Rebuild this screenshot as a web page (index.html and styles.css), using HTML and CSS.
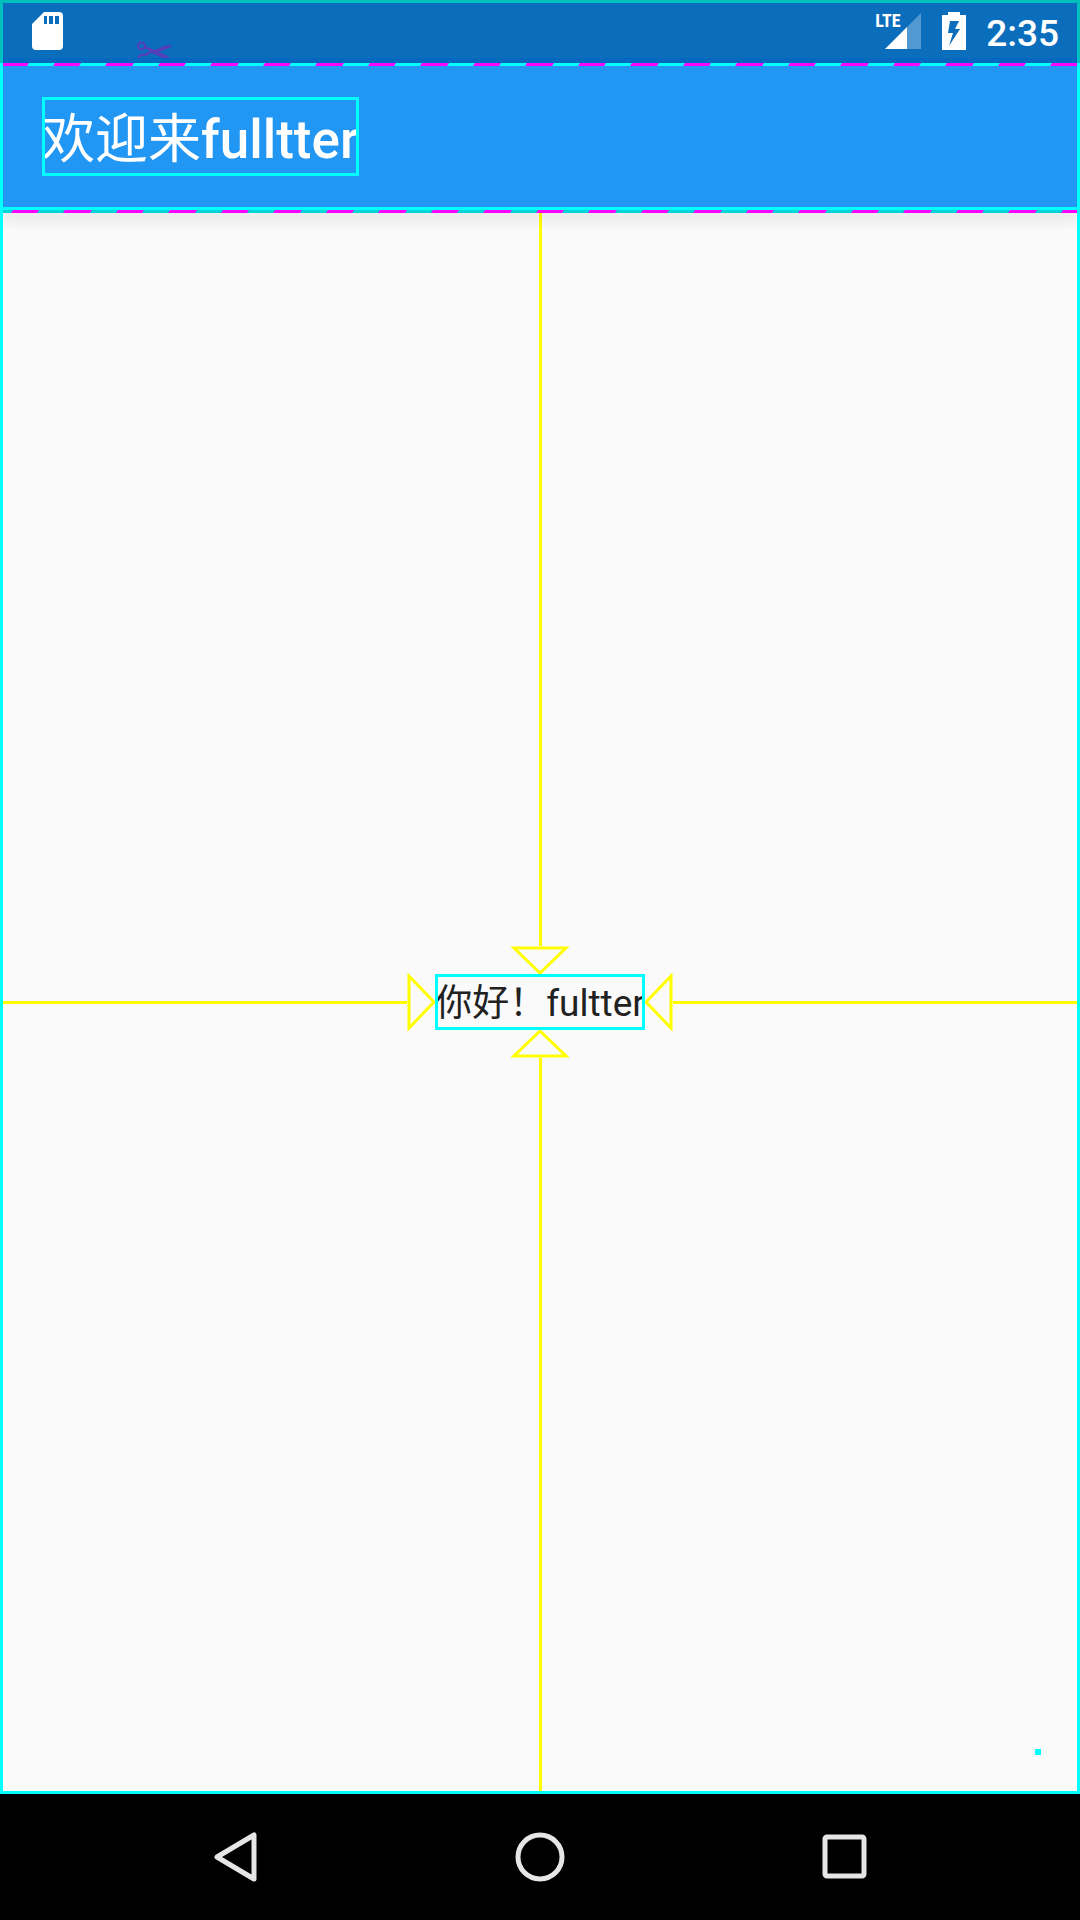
FILE: index.html
```
<!DOCTYPE html>
<html lang="zh-CN">
<head>
<meta charset="utf-8">
<meta name="viewport" content="width=device-width, initial-scale=1">
<title>欢迎来fulltter</title>
<link rel="stylesheet" href="styles.css">
</head>
<body>
<div class="status-bar">
  <svg class="sd-card" viewBox="0 0 31 38" aria-hidden="true"><path fill="#fff" fill-rule="evenodd" d="M12 0H27Q31 0 31 4V34Q31 38 27 38H4Q0 38 0 34V12ZM12 4V12H15V4ZM17 4V12H21V4ZM23 4V12H27V4Z"/></svg>
  <svg class="scissors" viewBox="0 0 35 17" aria-hidden="true">
    <g fill="none" stroke="#583db8" stroke-width="2"><circle cx="4.500" cy="5" r="3.500"/><path d="M1 17Q4 12 11 14"/></g>
    <path fill="#583db8" d="M8 5L18 9L27 5Q32 3 35 5Q33 7 21 11Q28 13 33 17H26L15 12L9 14L8 13L13 10L7 7Z"/>
  </svg>
  <div class="indicators">
    <div class="network">
      <span class="network-type">LTE</span>
      <svg class="signal" viewBox="0 0 36 36" aria-hidden="true"><path fill="#fff" fill-opacity=".3" d="M22 14L36 0V36H22Z"/><path fill="#fff" d="M0 36L22 14V36Z"/></svg>
    </div>
    <svg class="battery" viewBox="0 0 24 38" aria-hidden="true"><path fill="#fff" fill-rule="evenodd" d="M6 0H18V3H24V38H0V3H6ZM8 9L6 21H11L7 34L18 17H13L17 9Z"/></svg>
    <time class="clock">2:35</time>
  </div>
</div>
<div class="screen">
  <svg class="stripe" aria-hidden="true">
    <defs><pattern id="stripe-top" x="55" width="105" height="3" patternUnits="userSpaceOnUse"><path fill="#0ff" d="M0 0H105V3H0Z"/><path fill="#f0f" d="M0 0H26L24 3H0ZM52 0H79L77 3H50ZM105 0V3H103Z"/></pattern></defs>
    <rect width="100%" height="3" fill="url(#stripe-top)"/>
  </svg>
  <header class="app-bar">
    <h1 class="title"><span class="title-cjk">欢迎来</span>fulltter</h1>
  </header>
  <svg class="stripe stripe-bottom" aria-hidden="true">
    <defs><pattern id="stripe-bottom" x="13" width="105" height="3" patternUnits="userSpaceOnUse"><path fill="#00d4d4" d="M0 0H105V3H0Z"/><path fill="#f0f" d="M0 0H26L24 3H0ZM52 0H79L77 3H50ZM105 0V3H103Z"/></pattern></defs>
    <rect width="100%" height="3" fill="url(#stripe-bottom)"/>
  </svg>
  <main class="content">
    <div class="guide guide-top"><i class="line"></i><svg class="arrow-v" viewBox="0 0 58 28" aria-hidden="true"><path d="M3 2H55L29 27Z"/></svg></div>
    <div class="guide guide-left"><i class="line"></i><svg class="arrow-h" viewBox="0 0 28 58" aria-hidden="true"><path d="M2 3V55L27 29Z"/></svg></div>
    <p class="greeting">你好！fultter</p>
    <div class="guide guide-right"><svg class="arrow-h" viewBox="0 0 28 58" aria-hidden="true"><path d="M26 3V55L1 29Z"/></svg><i class="line"></i></div>
    <div class="guide guide-bottom"><svg class="arrow-v" viewBox="0 0 58 28" aria-hidden="true"><path d="M3 26H55L29 1Z"/></svg><i class="line"></i></div>
    <i class="marker"></i>
  </main>
</div>
<nav class="nav-bar">
  <button class="nav-button" aria-label="Back"><svg viewBox="0 0 50 50"><path d="M43 3V47L6 25Z"/></svg></button>
  <button class="nav-button" aria-label="Home"><svg viewBox="0 0 50 50"><circle cx="25" cy="25" r="22"/></svg></button>
  <button class="nav-button" aria-label="Recent apps"><svg viewBox="0 0 50 50"><rect x="6" y="5" width="39" height="39" rx="2"/></svg></button>
</nav>
</body>
</html>
```
FILE: styles.css
```
* { box-sizing: border-box; }

body {
  margin: 0;
  min-height: 100vh;
  display: flex;
  flex-direction: column;
  background: #fafafa;
  font-family: Roboto, "Noto Sans CJK SC", sans-serif;
}

svg { display: block; flex: none; }

.status-bar {
  position: relative;
  height: 63px;
  flex: none;
  display: flex;
  align-items: flex-start;
  justify-content: space-between;
  padding: 9px 18px 0 29px;
  border: 3px solid #00bfbf;
  border-bottom: 0;
  background: linear-gradient(#0a6ebd 55px, #0069bf 55px);
  color: #fff;
}

.sd-card { width: 31px; height: 38px; }

.scissors {
  position: absolute;
  left: 134px;
  bottom: 5px;
  width: 35px;
  height: 17px;
}

.indicators { display: flex; gap: 20px; }

.network { position: relative; width: 47px; height: 38px; }

.network-type {
  position: absolute;
  left: 0;
  top: 0;
  font: bold 18px/18px "Roboto Condensed", "Open Sans Condensed", "Liberation Sans Narrow", "Liberation Sans", sans-serif;
}

.signal { width: 36px; height: 36px; margin: 1px 0 0 10px; }

.battery { width: 24px; height: 38px; }

.clock {
  font-size: 37px;
  line-height: 44px;
  font-weight: 500;
}

.screen {
  position: relative;
  flex: 1;
  display: flex;
  flex-direction: column;
}

.screen::after {
  content: "";
  position: absolute;
  inset: 0;
  z-index: 3;
  border: 3px solid #0ff;
  border-top: 0;
  pointer-events: none;
}

.stripe { width: 100%; height: 3px; }

.stripe-bottom {
  position: relative;
  z-index: 1;
  box-shadow: 0 4px 14px rgba(0, 0, 0, .3);
}

.app-bar {
  position: relative;
  z-index: 2;
  height: 144px;
  display: flex;
  align-items: center;
  padding: 0 42px;
  border-bottom: 3px solid #0ff;
  background: #2196f3;
  color: #fff;
}

.title {
  margin: 0;
  padding-top: 8px;
  font-size: 53px;
  line-height: 71px;
  font-weight: 500;
  white-space: nowrap;
  outline: 3px solid #0ff;
  outline-offset: -3px;
}

.title-cjk { font-weight: 400; }

.content {
  position: relative;
  flex: 1;
  display: grid;
  margin-top: -3px;
  grid-template-columns: 1fr auto 1fr;
  grid-template-rows: 1fr auto 1fr;
  grid-template-areas: ". top ." "left text right" ". bottom .";
}

.greeting {
  grid-area: text;
  margin: 0;
  padding-top: 4px;
  font-size: 37px;
  line-height: 52px;
  color: #212121;
  white-space: nowrap;
  outline: 3px solid #0ff;
  outline-offset: -3px;
}

.guide { display: flex; align-items: center; min-width: 0; min-height: 0; }
.guide-top { grid-area: top; flex-direction: column; }
.guide-bottom { grid-area: bottom; flex-direction: column; }
.guide-left { grid-area: left; }
.guide-right { grid-area: right; }

.line { flex: 1; background: #ff0; }
.guide-top .line, .guide-bottom .line { width: 3px; }
.guide-left .line, .guide-right .line { height: 3px; }

.arrow-v, .arrow-h { fill: none; stroke: #ff0; stroke-width: 3; }
.arrow-v { width: 58px; height: 28px; }
.arrow-h { width: 28px; height: 58px; margin: -1px 0; }

.marker {
  position: absolute;
  right: 39px;
  bottom: 39px;
  width: 6px;
  height: 6px;
  background: #0ff;
}

.nav-bar {
  flex: none;
  height: 126px;
  display: grid;
  grid-template-columns: repeat(3, 1fr);
  padding: 0 84px;
  background: #000;
}

.nav-button {
  display: flex;
  align-items: center;
  justify-content: center;
  padding: 0;
  border: 0;
  background: none;
}

.nav-button svg {
  width: 50px;
  height: 50px;
  fill: none;
  stroke: #e6e6e6;
  stroke-width: 5;
  stroke-linejoin: round;
}
```
